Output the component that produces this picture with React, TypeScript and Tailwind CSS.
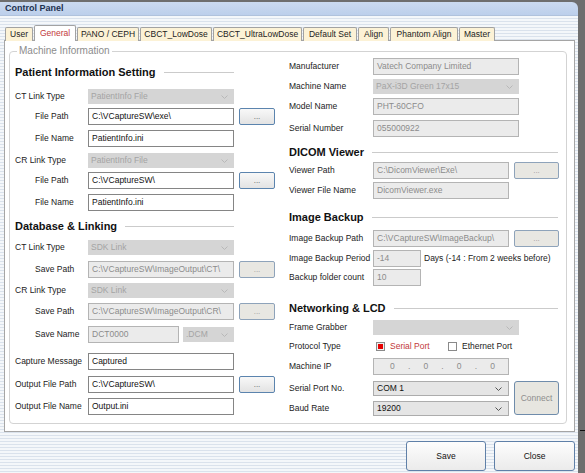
import React from 'react';

function Chevron({ color }: { color: string }) {
  return (
    <svg width="7" height="4" viewBox="0 0 7 4">
      <polyline points="0.5,0.5 3.5,3.5 6.5,0.5" fill="none" stroke={color} strokeWidth="1" />
    </svg>
  );
}

function TextBox({ value, w, disabled }: { value?: string; w: string; disabled?: boolean }) {
  return (
    <div
      className={`${w} h-[17px] flex items-center px-[3px] border whitespace-nowrap overflow-hidden ${
        disabled ? 'bg-[#ebebeb] border-[#b4b4b4] text-[#8c8c8c]' : 'bg-white border-[#858585] text-[#111]'
      }`}
    >
      {value}
    </div>
  );
}

function Combo({ value, w, enabled }: { value?: string; w: string; enabled?: boolean }) {
  return (
    <div
      className={`${w} h-[15px] flex items-center justify-between pl-[3px] pr-[6px] ${
        enabled ? 'bg-[#e5e5e5] border border-[#acacac] text-[#111]' : 'bg-[#d5d5d5] text-[#a4a4a4]'
      }`}
    >
      <span>{value}</span>
      <Chevron color={enabled ? '#555555' : '#b8b8b8'} />
    </div>
  );
}

function Dots({ w, disabled }: { w: string; disabled?: boolean }) {
  return (
    <div
      className={`${w} h-[17px] ml-[5px] flex items-center justify-center rounded-[2px] border text-[8px] leading-none ${
        disabled
          ? 'bg-[#e8e7e2] border-[#8ea3ba] text-[#9a9a9a]'
          : 'bg-linear-to-b from-[#f8f8f8] to-[#e3e3e3] border-[#5b84ae] text-[#555]'
      }`}
    >
      ...
    </div>
  );
}

function Row({
  label,
  lw,
  indent,
  className,
  children,
}: {
  label: string;
  lw: string;
  indent?: boolean;
  className?: string;
  children?: React.ReactNode;
}) {
  return (
    <div className={`flex items-center ${className ?? ''}`}>
      <span className={`${lw} shrink-0 whitespace-nowrap ${indent ? 'pl-[20px]' : ''}`}>{label}</span>
      {children}
    </div>
  );
}

function Heading({ text, className }: { text: string; className: string }) {
  return (
    <div className={`flex items-center h-[14px] ${className}`}>
      <span className="text-[11px] font-bold text-[#111] whitespace-nowrap">{text}</span>
      <div className="flex-1 h-px bg-[#cbcbcb] ml-[8px]" />
    </div>
  );
}

const tabs = [
  { name: 'User', w: 'w-[28px]' },
  { name: 'General', w: 'w-[42px]', active: true },
  { name: 'PANO / CEPH', w: 'w-[62px]' },
  { name: 'CBCT_LowDose', w: 'w-[72px]' },
  { name: 'CBCT_UltraLowDose', w: 'w-[89px]' },
  { name: 'Default Set', w: 'w-[54px]' },
  { name: 'Align', w: 'w-[31px]' },
  { name: 'Phantom Align', w: 'w-[68px]' },
  { name: 'Master', w: 'w-[36px]' },
];

export default function App() {
  const L = 'w-[73px]';
  const R = 'w-[84px]';
  return (
    <div className="flex w-[585px] h-[473px] bg-[#6e6e6e] overflow-hidden font-['Liberation_Sans',Arial,sans-serif] text-[8.5px] text-[#222]">
      {/* window */}
      <div className="w-[578px] h-full mt-[2px] flex flex-col rounded-tr-[6px] overflow-hidden">
        <div className="h-[14px] shrink-0 flex items-center pl-[5px] bg-linear-to-b from-[#cbdaf0] to-[#bccfeb] border-b border-[#b0c2dc]">
          <span className="text-[9px] font-bold text-[#1d3150]">Control Panel</span>
        </div>

        <div className="flex-1 flex flex-col bg-[repeating-linear-gradient(to_bottom,#f4f7fa_0px,#f4f7fa_2px,#dae2ec_2px,#dae2ec_3px)]">
          {/* tabs */}
          <div className="flex items-end gap-[1px] ml-[5px] mt-[9px] h-[16px] -mb-px relative z-10">
            {tabs.map((t) => (
              <div
                key={t.name}
                className={`${t.w} flex items-center justify-center border border-b-0 border-[#a2a2a2] rounded-t-[2px] whitespace-nowrap ${
                  t.active ? 'h-[16px] bg-white text-[#c2393b]' : 'h-[14px] bg-[#fcf2d6] text-[#222] border-b'
                }`}
              >
                {t.name}
              </div>
            ))}
          </div>

          {/* panel */}
          <div className="ml-[4px] w-[571px] h-[392px] bg-white border border-[#a5a5a5] pt-[10px] pl-[4px]">
            <div className="relative w-[558px] h-[373px] border border-[#d3d3d3] rounded-[4px] flex">
              <span className="absolute left-[7px] -top-[7px] px-[2px] bg-white text-[10px] leading-[12px] text-[#8c8c8c]">
                Machine Information
              </span>

              {/* left column */}
              <div className="ml-[5px] w-[260px] flex flex-col">
                <Heading text="Patient Information Setting" className="w-[219px] mt-[13px]" />
                <Row label="CT Link Type" lw={L} className="mt-[10px]">
                  <Combo value="PatientInfo File" w="w-[146px]" />
                </Row>
                <Row label="File Path" lw={L} indent className="mt-[4px]">
                  <TextBox value={'C:\\VCaptureSW\\exe\\'} w="w-[146px]" />
                  <Dots w="w-[36px]" />
                </Row>
                <Row label="File Name" lw={L} indent className="mt-[5px]">
                  <TextBox value="PatientInfo.ini" w="w-[146px]" />
                </Row>
                <Row label="CR Link Type" lw={L} className="mt-[6px]">
                  <Combo value="PatientInfo File" w="w-[146px]" />
                </Row>
                <Row label="File Path" lw={L} indent className="mt-[4px]">
                  <TextBox value={'C:\\VCaptureSW\\'} w="w-[146px]" />
                  <Dots w="w-[36px]" />
                </Row>
                <Row label="File Name" lw={L} indent className="mt-[5px]">
                  <TextBox value="PatientInfo.ini" w="w-[146px]" />
                </Row>

                <Heading text="Database & Linking" className="w-[219px] mt-[8px]" />
                <Row label="CT Link Type" lw={L} className="mt-[7px]">
                  <Combo value="SDK Link" w="w-[146px]" />
                </Row>
                <Row label="Save Path" lw={L} indent className="mt-[6px]">
                  <TextBox value={'C:\\VCaptureSW\\ImageOutput\\CT\\'} w="w-[146px]" disabled />
                  <Dots w="w-[36px]" disabled />
                </Row>
                <Row label="CR Link Type" lw={L} className="mt-[5px]">
                  <Combo value="SDK Link" w="w-[146px]" />
                </Row>
                <Row label="Save Path" lw={L} indent className="mt-[5px]">
                  <TextBox value={'C:\\VCaptureSW\\ImageOutput\\CR\\'} w="w-[146px]" disabled />
                  <Dots w="w-[36px]" disabled />
                </Row>
                <Row label="Save Name" lw={L} indent className="mt-[6px]">
                  <TextBox value="DCT0000" w="w-[91px]" disabled />
                  <div className="ml-[4px]">
                    <Combo value=".DCM" w="w-[51px]" />
                  </div>
                </Row>
                <Row label="Capture Message" lw={L} className="mt-[10px]">
                  <TextBox value="Captured" w="w-[146px]" />
                </Row>
                <Row label="Output File Path" lw={L} className="mt-[6px]">
                  <TextBox value={'C:\\VCaptureSW\\'} w="w-[146px]" />
                  <Dots w="w-[36px]" />
                </Row>
                <Row label="Output File Name" lw={L} className="mt-[5px]">
                  <TextBox value="Output.ini" w="w-[146px]" />
                </Row>
              </div>

              {/* right column */}
              <div className="ml-[14px] w-[270px] flex flex-col">
                <Row label="Manufacturer" lw={R} className="mt-[6px]">
                  <TextBox value="Vatech Company Limited" w="w-[146px]" disabled />
                </Row>
                <Row label="Machine Name" lw={R} className="mt-[4px]">
                  <Combo value="PaX-i3D Green 17x15" w="w-[146px]" />
                </Row>
                <Row label="Model Name" lw={R} className="mt-[4px]">
                  <TextBox value="PHT-60CFO" w="w-[146px]" disabled />
                </Row>
                <Row label="Serial Number" lw={R} className="mt-[5px]">
                  <TextBox value="055000922" w="w-[146px]" disabled />
                </Row>

                <Heading text="DICOM Viewer" className="w-[269px] mt-[8px]" />
                <Row label="Viewer Path" lw={R} className="mt-[3px]">
                  <TextBox value={'C:\\DicomViewer\\Exe\\'} w="w-[136px]" disabled />
                  <Dots w="w-[45px]" disabled />
                </Row>
                <Row label="Viewer File Name" lw={R} className="mt-[3px]">
                  <TextBox value="DicomViewer.exe" w="w-[136px]" disabled />
                </Row>

                <Heading text="Image Backup" className="w-[269px] mt-[11px]" />
                <Row label="Image Backup Path" lw={R} className="mt-[6px]">
                  <TextBox value={'C:\\VCaptureSW\\ImageBackup\\'} w="w-[136px]" disabled />
                  <Dots w="w-[45px]" disabled />
                </Row>
                <Row label="Image Backup Period" lw={R} className="mt-[3px]">
                  <TextBox value="-14" w="w-[48px]" disabled />
                  <span className="ml-[3px] whitespace-nowrap">Days (-14 : From 2 weeks before)</span>
                </Row>
                <Row label="Backup folder count" lw={R} className="mt-[2px]">
                  <TextBox value="10" w="w-[48px]" disabled />
                </Row>

                <Heading text="Networking & LCD" className="w-[269px] mt-[15px]" />
                <Row label="Frame Grabber" lw={R} className="mt-[5px]">
                  <Combo w="w-[146px]" />
                </Row>
                <Row label="Protocol Type" lw={R} className="mt-[4px] h-[14px]">
                  <div className="ml-[3px] w-[9px] h-[9px] border border-[#8a8a8a] bg-[#eeeeee] flex items-center justify-center">
                    <div className="w-[5px] h-[5px] bg-[#e60000]" />
                  </div>
                  <span className="ml-[5px] w-[58px] text-[#c2393b]">Serial Port</span>
                  <div className="w-[9px] h-[9px] border border-[#8a8a8a] bg-white" />
                  <span className="ml-[5px]">Ethernet Port</span>
                </Row>
                <Row label="Machine IP" lw={R} className="mt-[5px]">
                  <div className="w-[136px] h-[17px] flex items-center justify-between pl-[16px] pr-[13px] border border-[#b4b4b4] bg-[#ebebeb] text-[#8c8c8c]">
                    <span>0</span>
                    <span>.</span>
                    <span>0</span>
                    <span>.</span>
                    <span>0</span>
                    <span>.</span>
                    <span>0</span>
                  </div>
                </Row>
                <div className="flex items-start mt-[6px]">
                  <div className="flex flex-col">
                    <Row label="Serial Port No." lw={R}>
                      <Combo value="COM 1" w="w-[136px]" enabled />
                    </Row>
                    <Row label="Baud Rate" lw={R} className="mt-[5px]">
                      <Combo value="19200" w="w-[136px]" enabled />
                    </Row>
                  </div>
                  <div className="ml-[5px] w-[45px] h-[34px] flex items-center justify-center rounded-[3px] border border-[#6f8cab] bg-[#e7e6e0] text-[#8e8e8e]">
                    Connect
                  </div>
                </div>
              </div>
            </div>
          </div>

          {/* bottom buttons */}
          <div className="flex justify-end gap-[8px] pr-[3px] mt-[9px]">
            <div className="w-[80px] h-[30px] flex items-center justify-center rounded-[3px] border border-[#5f80a8] bg-linear-to-b from-[#fdfdfd] to-[#ebebeb] text-[#111]">
              Save
            </div>
            <div className="w-[81px] h-[30px] flex items-center justify-center rounded-[3px] border border-[#5f80a8] bg-linear-to-b from-[#fdfdfd] to-[#ebebeb] text-[#111]">
              Close
            </div>
          </div>
        </div>
      </div>

      {/* desktop strip at right */}
      <div className="flex-1 flex flex-col">
        <div className="mt-[430px] ml-[2px] h-px bg-[#111]" />
      </div>
    </div>
  );
}
